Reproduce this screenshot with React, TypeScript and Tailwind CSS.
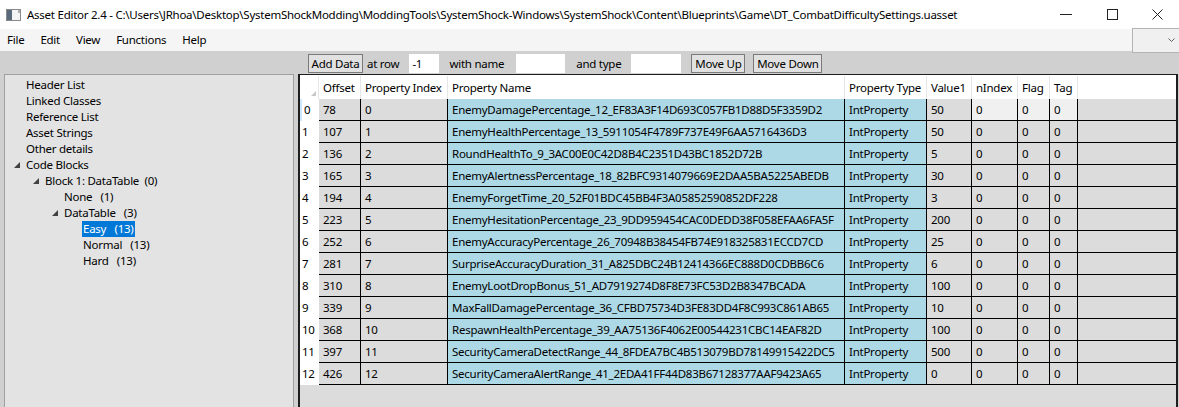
import React from "react";

const FONT = { fontFamily: '"Noto Sans", "Open Sans", sans-serif' };

type Row = { offset: number; name: string; value: number };

const rows: Row[] = [
  { offset: 78, name: "EnemyDamagePercentage_12_EF83A3F14D693C057FB1D88D5F3359D2", value: 50 },
  { offset: 107, name: "EnemyHealthPercentage_13_5911054F4789F737E49F6AA5716436D3", value: 50 },
  { offset: 136, name: "RoundHealthTo_9_3AC00E0C42D8B4C2351D43BC1852D72B", value: 5 },
  { offset: 165, name: "EnemyAlertnessPercentage_18_82BFC9314079669E2DAA5BA5225ABEDB", value: 30 },
  { offset: 194, name: "EnemyForgetTime_20_52F01BDC45BB4F3A05852590852DF228", value: 3 },
  { offset: 223, name: "EnemyHesitationPercentage_23_9DD959454CAC0DEDD38F058EFAA6FA5F", value: 200 },
  { offset: 252, name: "EnemyAccuracyPercentage_26_70948B38454FB74E918325831ECCD7CD", value: 25 },
  { offset: 281, name: "SurpriseAccuracyDuration_31_A825DBC24B12414366EC888D0CDBB6C6", value: 6 },
  { offset: 310, name: "EnemyLootDropBonus_51_AD7919274D8F8E73FC53D2B8347BCADA", value: 100 },
  { offset: 339, name: "MaxFallDamagePercentage_36_CFBD75734D3FE83DD4F8C993C861AB65", value: 10 },
  { offset: 368, name: "RespawnHealthPercentage_39_AA75136F4062E00544231CBC14EAF82D", value: 100 },
  { offset: 397, name: "SecurityCameraDetectRange_44_8FDEA7BC4B513079BD78149915422DC5", value: 500 },
  { offset: 426, name: "SecurityCameraAlertRange_41_2EDA41FF44D83B67128377AAF9423A65", value: 0 },
];

const treeItems = [
  { label: "Header List", level: 0 },
  { label: "Linked Classes", level: 0 },
  { label: "Reference List", level: 0 },
  { label: "Asset Strings", level: 0 },
  { label: "Other details", level: 0 },
  { label: "Code Blocks", level: 0, open: true },
  { label: "Block 1: DataTable  (0)", level: 1, open: true },
  { label: "None   (1)", level: 2 },
  { label: "DataTable   (3)", level: 2, open: true },
  { label: "Easy   (13)", level: 3, selected: true },
  { label: "Normal   (13)", level: 3 },
  { label: "Hard   (13)", level: 3 },
];

function Expander() {
  return (
    <svg width="6" height="6" viewBox="0 0 6 6" className="block">
      <polygon points="6,0 6,6 0,6" fill="#404040" />
    </svg>
  );
}

function WinButton({ label, className }: { label: string; className: string }) {
  return (
    <div
      className={`h-[19px] flex items-center justify-center bg-[#e1e1e1] border border-[#7a7a7a] text-black leading-none ${className}`}
    >
      {label}
    </div>
  );
}

function Cell({ w, bg, children }: { w: string; bg: string; children?: React.ReactNode }) {
  return (
    <div
      className={`${w} ${bg} h-full shrink-0 border-r border-black pl-[4px] flex items-center overflow-hidden whitespace-nowrap`}
    >
      {children}
    </div>
  );
}

export default function App() {
  return (
    <div
      className="w-[1179px] h-[407px] overflow-hidden flex flex-col bg-[#d0d0d0] text-black text-[11.5px] tracking-[-0.25px]"
      style={FONT}
    >
      {/* title bar */}
      <div className="h-[29px] bg-white flex items-center shrink-0">
        <svg width="16" height="14" viewBox="0 0 16 14" className="ml-[6px] mr-[5px]">
          <rect x="0.5" y="1.5" width="14" height="11" fill="#f4f4f4" stroke="#8a8a8a" />
          <rect x="1" y="2" width="5" height="10" fill="#5a6a7a" />
          <rect x="12" y="2" width="2" height="3" fill="#b0b0b0" />
        </svg>
        <span className="whitespace-nowrap">
          Asset Editor 2.4 - C:\Users\JRhoa\Desktop\SystemShockModding\ModdingTools\SystemShock-Windows\SystemShock\Content\Blueprints\Game\DT_CombatDifficultySettings.uasset
        </span>
        <div className="ml-auto flex h-full">
          <div className="w-[46px] flex items-center justify-center">
            <svg width="12" height="2" viewBox="0 0 12 2">
              <rect width="12" height="1" fill="#222" />
            </svg>
          </div>
          <div className="w-[46px] flex items-center justify-center">
            <svg width="11" height="11" viewBox="0 0 11 11">
              <rect x="0.5" y="0.5" width="10" height="10" fill="none" stroke="#222" />
            </svg>
          </div>
          <div className="w-[44px] flex items-center justify-center">
            <svg width="11" height="11" viewBox="0 0 11 11">
              <path d="M0.5 0.5 L10.5 10.5 M10.5 0.5 L0.5 10.5" stroke="#222" strokeWidth="1" />
            </svg>
          </div>
        </div>
      </div>

      {/* menu bar */}
      <div className="h-[22px] bg-[#f5f5f5] flex items-center shrink-0 relative z-10">
        <span className="ml-[7px]">File</span>
        <span className="ml-[16px]">Edit</span>
        <span className="ml-[16px]">View</span>
        <span className="ml-[16px]">Functions</span>
        <span className="ml-[16px]">Help</span>
        <div className="ml-auto self-start -mt-[1px] w-[47px] h-[25px] bg-[#f0f0f0] border border-[#b4b4b4] border-r-0 flex items-center justify-end pr-[4px]">
          <svg width="7" height="5" viewBox="0 0 7 5">
            <path d="M0.5 0.5 L3.5 3.5 L6.5 0.5" fill="none" stroke="#606060" strokeWidth="1" />
          </svg>
        </div>
      </div>

      {/* toolbar */}
      <div className="h-[22px] shrink-0 flex items-end">
        <WinButton label="Add Data" className="ml-[308px] w-[55px]" />
        <span className="ml-[4px] h-[19px] flex items-center">at row</span>
        <div className="ml-[10px] w-[30px] h-[19px] bg-white flex items-center pl-[3px]">-1</div>
        <span className="ml-[10px] h-[19px] flex items-center">with name</span>
        <div className="ml-[12px] w-[49px] h-[19px] bg-white" />
        <span className="ml-[11px] h-[19px] flex items-center">and type</span>
        <div className="ml-[10px] w-[50px] h-[19px] bg-white" />
        <WinButton label="Move Up" className="ml-[10px] w-[54px]" />
        <WinButton label="Move Down" className="ml-[8px] w-[69px]" />
      </div>

      {/* content */}
      <div className="flex-1 flex min-h-0 pt-[1px]">
        {/* tree */}
        <div className="ml-[4px] w-[290px] bg-[#e3e3e3] border border-[#a0a0a0] border-b-0 pt-[2px] shrink-0">
          {treeItems.map((it) => (
            <div key={it.label} className="h-[16px] flex items-center relative" style={{ paddingLeft: 20 + it.level * 19 }}>
              {it.open && (
                <div className="absolute top-[5px]" style={{ left: 9 + it.level * 19 }}>
                  <Expander />
                </div>
              )}
              <span
                className={`whitespace-pre leading-[16px] px-[1px] ${it.selected ? "bg-[#0078d7] text-white" : ""}`}
              >
                {it.label}
              </span>
            </div>
          ))}
        </div>

        {/* grid */}
        <div className="ml-[4px] flex-1 bg-[#dcdcdc] border-t border-l-2 border-r-2 border-[#1e1e1e] mr-[1px] flex flex-col min-w-0">
          {/* header */}
          <div className="h-[24px] bg-white flex shrink-0 pt-[1px]">
            <div className="w-[19px] h-full relative shrink-0 border-r border-[#e6e6e6]">
              <svg width="5" height="5" viewBox="0 0 5 5" className="absolute right-[2px] bottom-[3px]">
                <polygon points="5,0 5,5 0,5" fill="#c8c8c8" />
              </svg>
            </div>
            {[
              ["Offset", "w-[42px]"],
              ["Property Index", "w-[87px]"],
              ["Property Name", "w-[397px]"],
              ["Property Type", "w-[82px]"],
              ["Value1", "w-[45px]"],
              ["nIndex", "w-[46px]"],
              ["Flag", "w-[32px]"],
              ["Tag", "w-[28px]"],
            ].map(([t, w]) => (
              <div key={t} className={`${w} h-full shrink-0 border-r border-[#e6e6e6] pl-[4px] flex items-center whitespace-nowrap overflow-hidden`}>
                {t}
              </div>
            ))}
          </div>

          {/* rows */}
          {rows.map((r, i) => (
            <div key={i} className="h-[22px] flex shrink-0">
              <div className={`w-[19px] h-full shrink-0 bg-white flex items-center pl-[2px] ${i === 0 ? "border-l-2 border-[#cde8ff] pl-0" : ""}`}>
                {i}
              </div>
              <div className="flex-1 flex h-full border-b border-black min-w-0">
                <Cell w="w-[42px]" bg="bg-[#dcdcdc]">{r.offset}</Cell>
                <Cell w="w-[87px]" bg="bg-[#dcdcdc]">{i}</Cell>
                <Cell w="w-[397px]" bg="bg-[#add8e6]">{r.name}</Cell>
                <Cell w="w-[82px]" bg="bg-[#add8e6]">IntProperty</Cell>
                <Cell w="w-[45px]" bg="bg-[#dcdcdc]">{r.value}</Cell>
                <Cell w="w-[46px]" bg={i === 0 ? "bg-[#f0f0f0]" : "bg-[#dcdcdc]"}>0</Cell>
                <Cell w="w-[32px]" bg={i === 0 ? "bg-[#f0f0f0]" : "bg-[#dcdcdc]"}>0</Cell>
                <Cell w="w-[28px]" bg={i === 0 ? "bg-[#f0f0f0]" : "bg-[#dcdcdc]"}>0</Cell>
                <div className="flex-1 bg-[#dcdcdc]" />
              </div>
            </div>
          ))}
        </div>
      </div>
    </div>
  );
}
